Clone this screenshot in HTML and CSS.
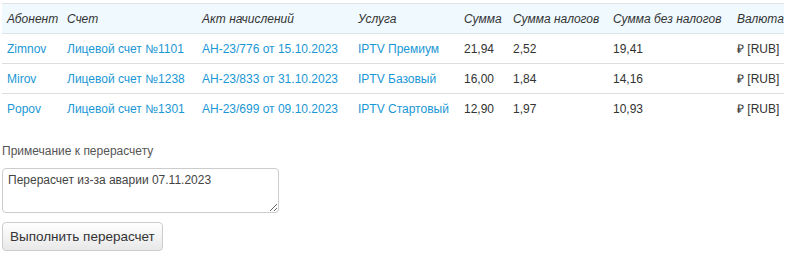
FILE: index.html
```html
<!DOCTYPE html>
<html lang="ru">
<head>
    <meta charset="UTF-8">
    <title>Перерасчет</title>
    <link rel="stylesheet" href="styles.css">
</head>
<body>

    <table class="charges">
        <thead>
            <tr>
                <th class="c-sub">Абонент</th>
                <th class="c-acc">Счет</th>
                <th class="c-act">Акт начислений</th>
                <th class="c-srv">Услуга</th>
                <th class="c-sum">Сумма</th>
                <th class="c-tax">Сумма налогов</th>
                <th class="c-net">Сумма без налогов</th>
                <th>Валюта</th>
            </tr>
        </thead>
        <tbody>
            <tr>
                <td><a href="#">Zimnov</a></td>
                <td><a href="#">Лицевой счет №1101</a></td>
                <td><a href="#">АН-23/776 от 15.10.2023</a></td>
                <td><a href="#">IPTV Премиум</a></td>
                <td>21,94</td>
                <td>2,52</td>
                <td>19,41</td>
                <td>₽ [RUB]</td>
            </tr>
            <tr>
                <td><a href="#">Mirov</a></td>
                <td><a href="#">Лицевой счет №1238</a></td>
                <td><a href="#">АН-23/833 от 31.10.2023</a></td>
                <td><a href="#">IPTV Базовый</a></td>
                <td>16,00</td>
                <td>1,84</td>
                <td>14,16</td>
                <td>₽ [RUB]</td>
            </tr>
            <tr>
                <td><a href="#">Popov</a></td>
                <td><a href="#">Лицевой счет №1301</a></td>
                <td><a href="#">АН-23/699 от 09.10.2023</a></td>
                <td><a href="#">IPTV Стартовый</a></td>
                <td>12,90</td>
                <td>1,97</td>
                <td>10,93</td>
                <td>₽ [RUB]</td>
            </tr>
        </tbody>
    </table>

    <form class="recalc">
        <label for="note">Примечание к перерасчету</label>
        <textarea id="note">Перерасчет из-за аварии 07.11.2023</textarea>
        <button type="button">Выполнить перерасчет</button>
    </form>

</body>
</html>
```

FILE: styles.css
```css
body {
    margin: 0;
    padding: 3px 4px 0 2px;
    font-family: "Liberation Sans", Arial, sans-serif;
    font-size: 12px;
    color: #333;
}

a {
    color: #1a97d5;
    text-decoration: none;
}

.charges {
    width: 782px;
    border-collapse: collapse;
    table-layout: fixed;
}
.charges th,
.charges td {
    text-align: left;
    padding: 0 5px;
    height: 29px;
    white-space: nowrap;
}
.charges th {
    font-weight: normal;
    font-style: italic;
    background: #eff9fe;
    border-top: 1px solid #dde3e6;
    border-bottom: 1px solid #dde3e6;
}
.charges tbody tr + tr td {
    border-top: 1px solid #dedede;
}

.c-sub { width: 50px; }
.c-acc { width: 125px; }
.c-act { width: 146px; }
.c-srv { width: 96px; }
.c-sum { width: 39px; }
.c-tax { width: 90px; }
.c-net { width: 114px; }

.recalc {
    display: flex;
    flex-direction: column;
    align-items: flex-start;
    margin-top: 21px;
}
.recalc label {
    font-size: 12px;
    color: #555;
    margin-bottom: 10px;
}
.recalc textarea {
    box-sizing: border-box;
    width: 277px;
    height: 45px;
    padding: 4px 5px;
    border: 1px solid #ccc;
    border-radius: 4px;
    font-family: inherit;
    font-size: 12px;
    color: #444;
    margin: 0 0 9px;
}
.recalc button {
    box-sizing: border-box;
    height: 29px;
    padding: 0 7px;
    border: 1px solid #ccc;
    border-radius: 4px;
    background: linear-gradient(#fff, #e8e8e8);
    font-family: inherit;
    font-size: 13.5px;
    color: #333;
}
```
